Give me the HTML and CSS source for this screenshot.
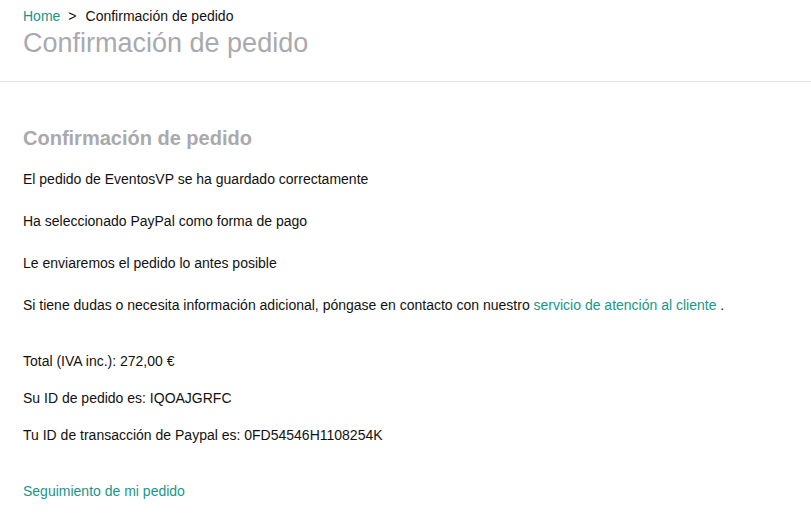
FILE: index.html
```html
<!DOCTYPE html>
<html lang="es">
<head>
<meta charset="utf-8">
<title>Confirmación de pedido</title>
<link rel="stylesheet" href="styles.css">
</head>
<body>
<header class="page-header">
  <nav class="breadcrumb"><a href="#" class="link">Home</a><span class="sep">&gt;</span><span>Confirmación de pedido</span></nav>
  <h1 class="page-title">Confirmación de pedido</h1>
</header>
<main class="content">
  <h2 class="section-title">Confirmación de pedido</h2>
  <p class="msg">El pedido de EventosVP se ha guardado correctamente</p>
  <p class="msg">Ha seleccionado PayPal como forma de pago</p>
  <p class="msg">Le enviaremos el pedido lo antes posible</p>
  <p class="msg">Si tiene dudas o necesita información adicional, póngase en contacto con nuestro <a href="#" class="link">servicio de atención al cliente</a> .</p>
  <div class="details">
    <p class="detail">Total (IVA inc.): 272,00 €</p>
    <p class="detail">Su ID de pedido es: IQOAJGRFC</p>
    <p class="detail">Tu ID de transacción de Paypal es: 0FD54546H1108254K</p>
  </div>
  <p class="track"><a href="#" class="link">Seguimiento de mi pedido</a></p>
</main>
</body>
</html>
```
FILE: styles.css
```css
html, body {
  margin: 0;
  padding: 0;
  background: #fff;
}
body {
  font-family: "Liberation Sans", Arial, sans-serif;
  font-size: 14px;
  color: #111;
}
.link {
  color: #17968a;
  text-decoration: none;
}
.page-header {
  padding: 8px 23px 23px;
  border-bottom: 1px solid #e6e6e6;
}
.breadcrumb {
  line-height: 16px;
  display: flex;
  align-items: center;
}
.breadcrumb .sep {
  margin: 0 9px 0 8px;
}
.page-title {
  margin: 4px 0 0;
  font-size: 27px;
  line-height: 30px;
  font-weight: normal;
  color: #a9a9ae;
}
.content {
  padding: 44px 23px 20px;
}
.section-title {
  margin: 0 0 19px;
  font-size: 20px;
  line-height: 24px;
  font-weight: bold;
  color: #a9a9ae;
}
.msg {
  margin: 0 0 22px;
  line-height: 20px;
}
.details {
  margin-top: 36px;
  display: flex;
  flex-direction: column;
  gap: 17px;
}
.detail {
  margin: 0;
  line-height: 20px;
}
.track {
  margin: 36px 0 0;
  line-height: 20px;
}
```
